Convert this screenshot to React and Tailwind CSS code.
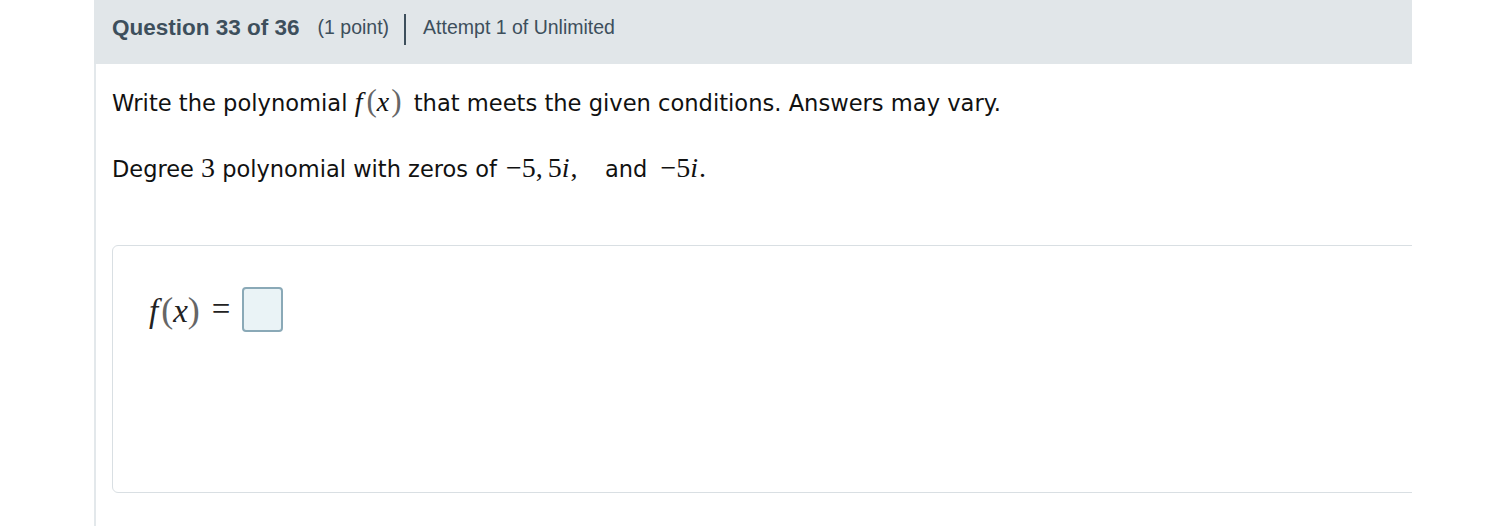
import React from 'react';

const serif = { fontFamily: '"Liberation Serif", "Times New Roman", serif' };

function M({ children, italic = false, className = '' }) {
  return (
    <span style={serif} className={`${italic ? 'italic' : ''} text-[28px] ${className}`}>
      {children}
    </span>
  );
}

export default function App() {
  return (
    <div className="w-[1500px] h-[526px] bg-white overflow-hidden">
      <div className="ml-[94px] w-[1318px] h-[526px] overflow-hidden">
        <header
          className="h-16 bg-[#e1e6e9] flex items-center pl-[18px] pb-[8px] text-[#3d4f5c]"
          style={{ fontFamily: '"Liberation Sans", Arial, sans-serif' }}
        >
          <span className="text-[22.5px] font-bold">Question 33 of 36</span>
          <span className="text-[19.5px] ml-[18px]">(1 point)</span>
          <span className="w-[2px] h-[31px] bg-[#3d4f5c] ml-[15px] mr-[17px] mt-[3px]" />
          <span className="text-[19.5px]">Attempt 1 of Unlimited</span>
        </header>
        <main
          className="border-l-[2px] border-[#e3e8eb] h-[462px] pl-[16px] pt-[19px] text-[#111]"
          style={{ fontFamily: 'Verdana, "DejaVu Sans", sans-serif' }}
        >
          <p className="text-[22.6px] leading-[36px]">
            Write the polynomial <M italic>f</M>
            <M className="text-[#666] text-[31px] ml-[4px]">(</M>
            <M italic>x</M>
            <M className="text-[#666] text-[31px] ml-[2px] mr-[5px]">)</M> that meets the given conditions. Answers may vary.
          </p>
          <p className="text-[22.5px] leading-[36px] mt-[29px]">
            Degree <M>3</M> polynomial with zeros of <M className="ml-[2px]">−5,</M>
            <M className="ml-[5px]">5</M><M italic className="mr-[1px]">i</M><M className="mr-[6px]">,</M>&nbsp;&nbsp; and{' '}
            <M className="ml-[6px]">−5</M><M italic className="mr-[1px]">i</M><M>.</M>
          </p>
          <section className="mt-[58px] w-[1320px] h-[248px] border border-[#d9dfe3] rounded-[6px] pl-[36px] pt-[41px]">
            <div className="flex items-center text-[#222]" style={serif}>
              <span className="text-[33px] leading-none">
                <i>f</i>
                <span className="text-[#666] text-[36px] ml-[3px]">(</span>
                <i>x</i>
                <span className="text-[#666] text-[36px]">)</span>
              </span>
              <span className="text-[33px] leading-none ml-[12px]">=</span>
              <span className="w-[41px] h-[45px] ml-[12px] rounded-[4px] border-[2px] border-[#8aa9b7] bg-[#eaf3f6]" />
            </div>
          </section>
        </main>
      </div>
    </div>
  );
}
